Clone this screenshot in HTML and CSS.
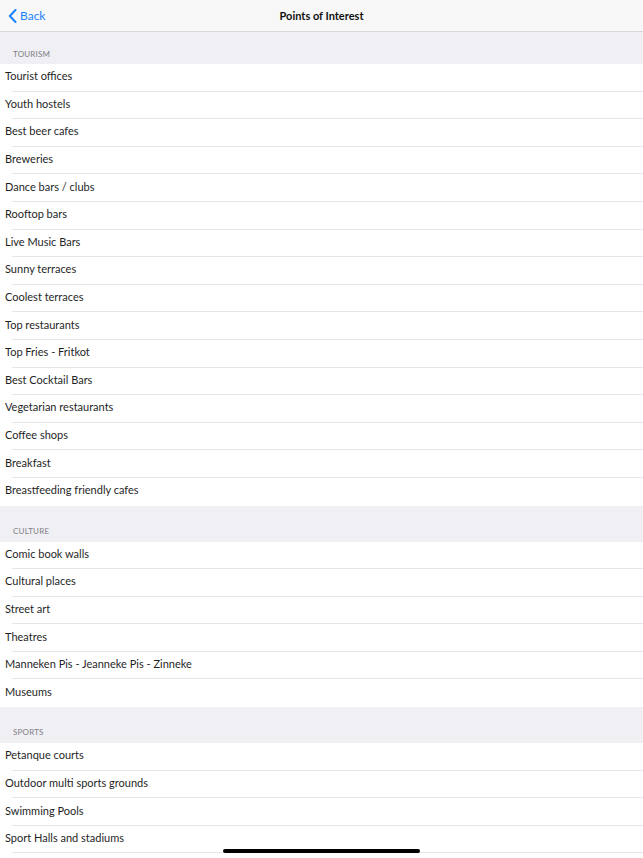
FILE: index.html
```html
<!DOCTYPE html>
<html>
<head>
<meta charset="utf-8">
<link rel="stylesheet" href="styles.css">
</head>
<body>
<header class="navbar">
  <a class="back">
    <svg class="chev" width="9" height="14" viewBox="0 0 9 14"><path d="M7.5 1 L1.8 7 L7.5 13" fill="none" stroke="#1a82fb" stroke-width="2" stroke-linecap="round" stroke-linejoin="round"/></svg>
    <span>Back</span>
  </a>
  <h1 class="title">Points of Interest</h1>
</header>
<main class="list">
  <section class="section first">
    <h2 class="section-head">TOURISM</h2>
    <ul class="rows">
      <li>Tourist offices</li>
      <li>Youth hostels</li>
      <li>Best beer cafes</li>
      <li>Breweries</li>
      <li>Dance bars / clubs</li>
      <li>Rooftop bars</li>
      <li>Live Music Bars</li>
      <li>Sunny terraces</li>
      <li>Coolest terraces</li>
      <li>Top restaurants</li>
      <li>Top Fries - Fritkot</li>
      <li>Best Cocktail Bars</li>
      <li>Vegetarian restaurants</li>
      <li>Coffee shops</li>
      <li>Breakfast</li>
      <li>Breastfeeding friendly cafes</li>
    </ul>
  </section>
  <section class="section">
    <h2 class="section-head">CULTURE</h2>
    <ul class="rows">
      <li>Comic book walls</li>
      <li>Cultural places</li>
      <li>Street art</li>
      <li>Theatres</li>
      <li>Manneken Pis - Jeanneke Pis - Zinneke</li>
      <li>Museums</li>
    </ul>
  </section>
  <section class="section open">
    <h2 class="section-head">SPORTS</h2>
    <ul class="rows">
      <li>Petanque courts</li>
      <li>Outdoor multi sports grounds</li>
      <li>Swimming Pools</li>
      <li>Sport Halls and stadiums</li>
    </ul>
  </section>
</main>
<div class="home-indicator"></div>
</body>
</html>
```
FILE: styles.css
```css
html, body {
  margin: 0;
  padding: 0;
}
body {
  width: 643px;
  height: 858px;
  overflow: hidden;
  background: #ffffff;
  font-family: Lato, "Noto Sans", sans-serif;
  color: #1c1c1e;
  position: relative;
}
.navbar {
  height: 31px;
  background: #f8f8f8;
  border-bottom: 1px solid #d8d8dc;
  display: flex;
  align-items: center;
  justify-content: center;
  position: relative;
}
.back {
  position: absolute;
  left: 8px;
  top: 8px;
  display: flex;
  align-items: center;
  gap: 3px;
  color: #1a82fb;
  font-size: 12px;
}
.title {
  margin: 0;
  font-size: 11px;
  font-weight: 700;
  color: #111;
}
.list {
  display: flex;
  flex-direction: column;
}
.section-head {
  margin: 0;
  height: 36px;
  box-sizing: border-box;
  padding: 0 0 6px 13px;
  display: flex;
  align-items: flex-end;
  background: #efeff4;
  font-size: 8px;
  font-weight: 400;
  color: #7e7e84;
  letter-spacing: 0.2px;
}
.section.first .section-head {
  height: 32px;
  padding-bottom: 5px;
}
.rows {
  list-style: none;
  margin: 0;
  padding: 0;
}
.rows li {
  height: 27.6px;
  box-sizing: border-box;
  padding: 0 0 4px 5px;
  display: flex;
  align-items: center;
  font-size: 11px;
  color: #1f1f1f;
  position: relative;
}
.rows li::after {
  content: "";
  position: absolute;
  left: 12px;
  right: 0;
  bottom: 0;
  height: 1px;
  background: #e6e6ea;
}
.rows li:last-child::after {
  display: none;
}
.section.open .rows li:last-child::after {
  display: block;
}
.home-indicator {
  position: absolute;
  left: 223px;
  top: 849px;
  width: 197px;
  height: 4px;
  border-radius: 2px;
  background: #000;
}
```
